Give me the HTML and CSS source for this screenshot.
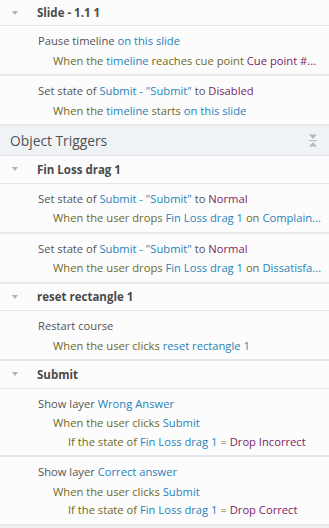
FILE: index.html
```html
<!DOCTYPE html>
<html>
<head>
<meta charset="utf-8">
<link rel="stylesheet" href="styles.css">
</head>
<body>
<div class="panel">
  <div class="group first"><span class="caret"></span><span class="gname">Slide - 1.1 1</span></div>
  <div class="trig">
    <div class="act">Pause timeline <span class="b">on this slide</span></div>
    <div class="when"><span class="o">When the</span> <span class="b">timeline</span> <span class="o">reaches cue point</span> <span class="p">Cue point #...</span></div>
  </div>
  <div class="trig">
    <div class="act">Set state of <span class="b">Submit - "Submit"</span> to <span class="p">Disabled</span></div>
    <div class="when"><span class="o">When the</span> <span class="b">timeline</span> <span class="o">starts</span> <span class="b">on this slide</span></div>
  </div>
  <div class="section"><span class="stitle">Object Triggers</span>
    <svg class="collapse" width="8" height="13" viewBox="0 0 8 13"><path d="M0 0.5H8L4 5Z" fill="#b3bac2"/><rect x="0" y="6" width="8" height="1" fill="#b3bac2"/><path d="M0 12.5H8L4 8Z" fill="#b3bac2"/></svg>
  </div>
  <div class="group"><span class="caret"></span><span class="gname">Fin Loss drag 1</span></div>
  <div class="trig">
    <div class="act">Set state of <span class="b">Submit - "Submit"</span> to <span class="p">Normal</span></div>
    <div class="when"><span class="o">When the user drops</span> <span class="b">Fin Loss drag 1</span> <span class="o">on</span> <span class="b">Complain...</span></div>
  </div>
  <div class="trig">
    <div class="act">Set state of <span class="b">Submit - "Submit"</span> to <span class="p">Normal</span></div>
    <div class="when"><span class="o">When the user drops</span> <span class="b">Fin Loss drag 1</span> <span class="o">on</span> <span class="b">Dissatisfa...</span></div>
  </div>
  <div class="group"><span class="caret"></span><span class="gname">reset rectangle 1</span></div>
  <div class="trig">
    <div class="act">Restart course</div>
    <div class="when"><span class="o">When the user clicks</span> <span class="b">reset rectangle 1</span></div>
  </div>
  <div class="group"><span class="caret"></span><span class="gname">Submit</span></div>
  <div class="trig">
    <div class="act">Show layer <span class="b">Wrong Answer</span></div>
    <div class="when"><span class="o">When the user clicks</span> <span class="b">Submit</span></div>
    <div class="cond"><span class="o">If the state of</span> <span class="b">Fin Loss drag 1</span> <span class="o">=</span> <span class="p">Drop Incorrect</span></div>
  </div>
  <div class="trig">
    <div class="act">Show layer <span class="b">Correct answer</span></div>
    <div class="when"><span class="o">When the user clicks</span> <span class="b">Submit</span></div>
    <div class="cond"><span class="o">If the state of</span> <span class="b">Fin Loss drag 1</span> <span class="o">=</span> <span class="p">Drop Correct</span></div>
  </div>
</div>
</body>
</html>
```
FILE: styles.css
```css
html, body { margin: 0; padding: 0; background: #f0f3f6; }
body { width: 329px; height: 528px; overflow: hidden; font-family: "Open Sans", "Noto Sans", sans-serif; font-size: 11.2px; color: #555; }
.panel { display: flex; flex-direction: column; }
.group { height: 26.5px; flex: none; display: flex; align-items: center; background: #fcfcfc; border-bottom: 1px solid #e4e7ea; font-weight: bold; color: #4a4a4a; }
.group.first { height: 25px; }
.caret { width: 0; height: 0; border-left: 3.5px solid transparent; border-right: 3.5px solid transparent; border-top: 4px solid #b0b4b8; margin-left: 12px; margin-right: 19px; }
.gname { font-size: 11.5px; }
.trig { flex: none; background: #fcfcfc; border-bottom: 2px solid #e6e9ec; padding: 5px 0 4px 0; display: flex; flex-direction: column; }
.act, .when { height: 19.5px; line-height: 19.5px; white-space: nowrap; }
.cond { height: 18.5px; line-height: 18.5px; white-space: nowrap; }
.act { padding-left: 38px; }
.when { padding-left: 53px; }
.cond { padding-left: 68px; }
.b { color: #1f83b8; }
.o { color: #6f6a24; }
.p { color: #7b1c65; }
.section { flex: none; height: 29px; display: flex; align-items: center; justify-content: space-between; background: #f0f3f6; border-bottom: 1px solid #e1e5e9; padding: 0 12px 0 10px; font-size: 13.8px; color: #505050; }
```
